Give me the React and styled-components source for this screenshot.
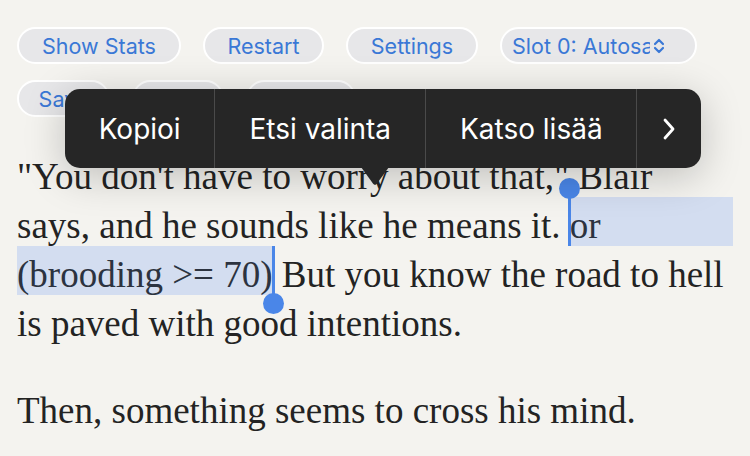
import styled, { createGlobalStyle } from "styled-components";

const GlobalStyle = createGlobalStyle`
  html, body { margin: 0; padding: 0; background: #f4f3ef; }
  body { font-family: "Liberation Serif", serif; }
`;

const Page = styled.div`
  position: relative;
  width: 750px;
  height: 456px;
  overflow: hidden;
  box-sizing: border-box;
  padding: 27px 17px 0 17px;
`;

const Toolbar = styled.div`
  display: flex;
  flex-wrap: wrap;
  column-gap: 22px;
  row-gap: 16px;
  width: 700px;
`;

const Pill = styled.button`
  box-sizing: border-box;
  height: 37px;
  width: ${(p) => p.$w}px;
  padding: 0 0 0 ${(p) => p.$pl || 0}px;
  border: 2px solid #ffffff;
  border-radius: 19px;
  background: #e7e7e9;
  color: #3a78d6;
  font-family: "Inter", "Noto Sans", sans-serif;
  font-size: 21.5px;
  display: flex;
  align-items: center;
  justify-content: ${(p) => (p.$pl ? "flex-start" : "center")};
  white-space: nowrap;
  overflow: hidden;
`;

const SelectText = styled.span`
  width: 138px;
  margin-right: 2px;
  overflow: hidden;
  white-space: nowrap;
`;

const Story = styled.div`
  margin-top: 31px;
  font-size: 37px;
  line-height: 57px;
  color: #232323;
`;

const Para = styled.div`
  margin-bottom: 38px;
`;

const Line = styled.div`
  display: flex;
  align-items: flex-start;
  height: 49px;
  white-space: pre;
  width: 716px;
`;

const Mark = styled.span`
  position: relative;
  height: 49px;
  background: #d3ddf0;
  color: #2c3340;
  flex: ${(p) => (p.$grow ? 1 : "none")};
`;

const Handle = styled.span`
  position: absolute;
  top: 0;
  bottom: 0;
  width: 3px;
  background: #4a86e8;
  ${(p) => (p.$end ? "right: -3px;" : "left: -2px;")}
  &::after {
    content: "";
    position: absolute;
    left: -9px;
    width: 21px;
    height: 21px;
    border-radius: 50%;
    background: #4a86e8;
    ${(p) => (p.$end ? "bottom: -19px;" : "top: -19px;")}
  }
`;

const Callout = styled.div`
  position: absolute;
  left: 65px;
  top: 89px;
  width: 636px;
  height: 79px;
  display: flex;
  background: #262626;
  border-radius: 15px;
  box-shadow: 0 8px 40px rgba(0, 0, 0, 0.22);
  font-family: "Inter", "Noto Sans", sans-serif;
  font-size: 28px;
  color: #ffffff;
  &::after {
    content: "";
    position: absolute;
    left: 296px;
    bottom: -17px;
    width: 28px;
    height: 18px;
    background: #262626;
    clip-path: polygon(0 0, 100% 0, 56% 94%, 50% 100%, 44% 94%);
  }
`;

const Action = styled.div`
  width: ${(p) => p.$w}px;
  display: flex;
  align-items: center;
  justify-content: center;
  border-right: ${(p) => (p.$last ? "none" : "1px solid #4a4a4a")};
`;

function UpDown() {
  return (
    <svg width="14" height="16" viewBox="0 0 14 16" fill="none" stroke="#3a78d6" strokeWidth="2.2" strokeLinecap="round" strokeLinejoin="round">
      <path d="M3 6 L7 2 L11 6" />
      <path d="M3 10 L7 14 L11 10" />
    </svg>
  );
}

function Chevron() {
  return (
    <svg width="16" height="22" viewBox="0 0 16 22" fill="none" stroke="#ffffff" strokeWidth="2.8" strokeLinecap="round" strokeLinejoin="round">
      <path d="M4 2 L12 11 L4 20" />
    </svg>
  );
}

export default function App() {
  return (
    <>
      <GlobalStyle />
      <Page>
        <Toolbar>
          <Pill $w={164}>Show Stats</Pill>
          <Pill $w={121}>Restart</Pill>
          <Pill $w={132}>Settings</Pill>
          <Pill $w={197} $pl={10}>
            <SelectText>Slot 0: Autosave</SelectText>
            <UpDown />
          </Pill>
          <Pill $w={93}>Save</Pill>
          <Pill $w={92}>Load</Pill>
          <Pill $w={110}>Delete</Pill>
        </Toolbar>
        <Story>
          <Para>
            <Line>"You don't have to worry about that," Blair</Line>
            <Line>
              {"says, and he sounds like he means it. "}
              <Mark $grow>
                <Handle />
                or
              </Mark>
            </Line>
            <Line>
              <Mark>
                (brooding &gt;= 70)
                <Handle $end />
              </Mark>
              {" But you know the road to hell"}
            </Line>
            <Line>is paved with good intentions.</Line>
          </Para>
          <Para>
            <Line>Then, something seems to cross his mind.</Line>
          </Para>
        </Story>
        <Callout>
          <Action $w={150}>Kopioi</Action>
          <Action $w={211}>Etsi valinta</Action>
          <Action $w={211}>Katso lisää</Action>
          <Action $w={64} $last>
            <Chevron />
          </Action>
        </Callout>
      </Page>
    </>
  );
}
